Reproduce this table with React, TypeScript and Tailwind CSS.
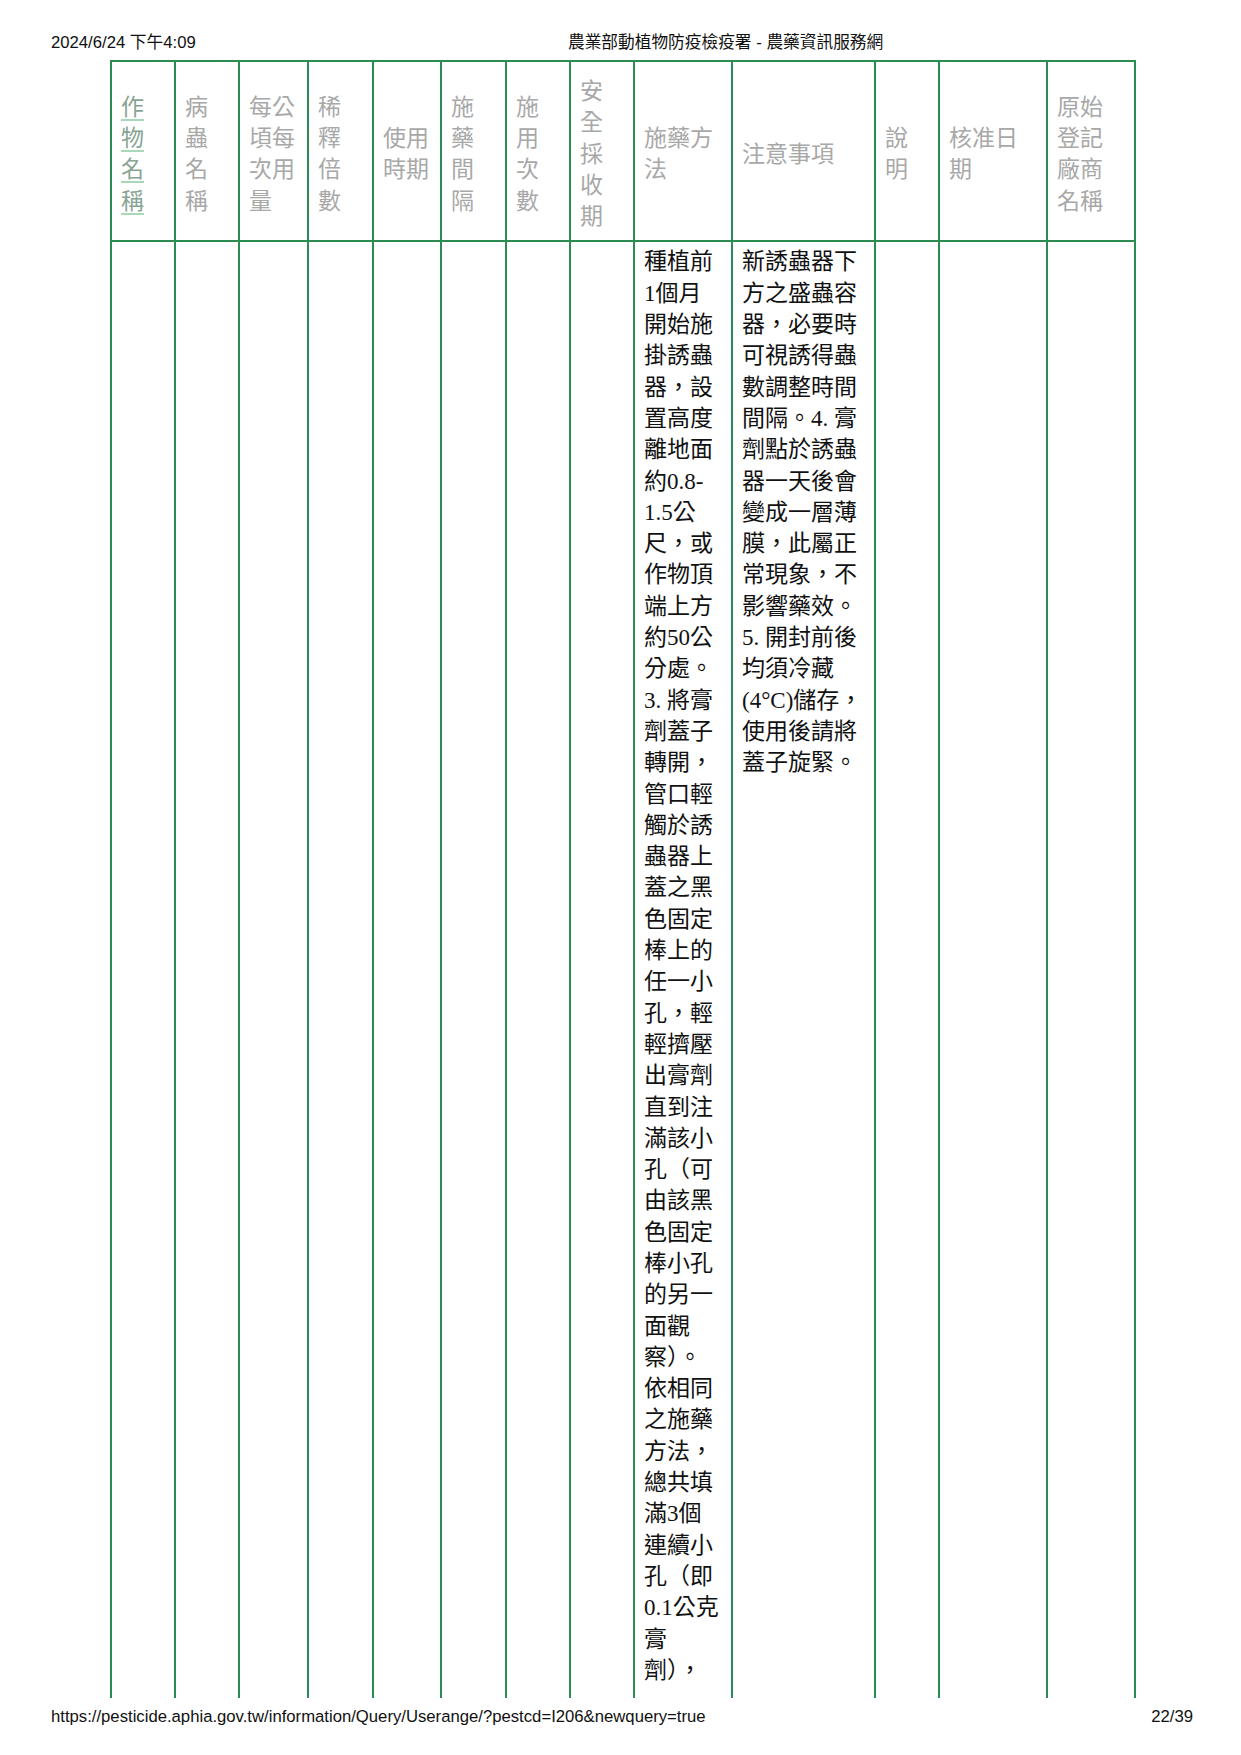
import React, { FC } from "react";

const widths = [
  "w-[64px]",
  "w-[64px]",
  "w-[69px]",
  "w-[65px]",
  "w-[68px]",
  "w-[65px]",
  "w-[64px]",
  "w-[64px]",
  "w-[98px]",
  "w-[143px]",
  "w-[64px]",
  "w-[108px]",
  "w-[88px]",
];

const headers = [
  "病蟲名稱",
  "每公頃每次用量",
  "稀釋倍數",
  "使用時期",
  "施藥間隔",
  "施用次數",
  "安全採收期",
  "施藥方法",
  "注意事項",
  "說明",
  "核准日期",
  "原始登記廠商名稱",
];

const method =
  "種植前1個月開始施掛誘蟲器，設置高度離地面約0.8-1.5公尺，或作物頂端上方約50公分處。3. 將膏劑蓋子轉開，管口輕觸於誘蟲器上蓋之黑色固定棒上的任一小孔，輕輕擠壓出膏劑直到注滿該小孔（可由該黑色固定棒小孔的另一面觀察）。依相同之施藥方法，總共填滿3個連續小孔（即0.1公克膏劑），";

const notes =
  "新誘蟲器下方之盛蟲容器，必要時可視誘得蟲數調整時間間隔。4. 膏劑點於誘蟲器一天後會變成一層薄膜，此屬正常現象，不影響藥效。5. 開封前後均須冷藏(4°C)儲存，使用後請將蓋子旋緊。";

const th =
  "border-2 border-[#2b8c52] pl-[9px] pr-[9px] pt-[12px] pb-[10px] align-middle text-left font-normal";
const td =
  "border-2 border-[#2b8c52] pl-[9px] pr-[9px] pt-[4px] align-top [font-feature-settings:'locl']";

const App: FC = () => {
  return (
    <div
      lang="zh-TW"
      className="w-[1241px] h-[1755px] bg-white overflow-hidden font-['Liberation_Sans','Noto_Sans_CJK_TC',sans-serif] text-[#111]"
    >
      <div className="flex h-[60px] pt-[34px] pl-[51px] text-[16.7px] leading-[18px]">
        <div className="w-[517px]">2024/6/24 下午4:09</div>
        <div>農業部動植物防疫檢疫署 - 農藥資訊服務網</div>
      </div>

      <div className="ml-[110px] h-[1638px] overflow-hidden">
        <table className="table-fixed border-collapse w-[1026px]">
          <colgroup>
            {widths.map((w, i) => (
              <col key={i} className={w} />
            ))}
          </colgroup>
          <thead>
            <tr className="font-['Noto_Sans_CJK_TC',sans-serif] text-[23px] leading-[31.3px] text-[#a8a8a8]">
              <th className={th}>
                <span className="text-[#88a493] underline decoration-[#a8d8b8] underline-offset-[4px]">
                  作物名稱
                </span>
              </th>
              {headers.map((h) => (
                <th key={h} className={th}>
                  {h}
                </th>
              ))}
            </tr>
          </thead>
          <tbody>
            <tr className="font-['Liberation_Serif','Noto_Sans_CJK_TC',serif] text-[23px] leading-[31.3px] text-[#111]">
              <td className={td + " h-[1600px]"}></td>
              <td className={td}></td>
              <td className={td}></td>
              <td className={td}></td>
              <td className={td}></td>
              <td className={td}></td>
              <td className={td}></td>
              <td className={td}></td>
              <td className={td}>{method}</td>
              <td className={td}>{notes}</td>
              <td className={td}></td>
              <td className={td}></td>
              <td className={td}></td>
            </tr>
          </tbody>
        </table>
      </div>

      <div className="flex justify-between pt-[10px] pl-[51px] pr-[48px] text-[16.7px] leading-[18px]">
        <div>https://pesticide.aphia.gov.tw/information/Query/Userange/?pestcd=I206&amp;newquery=true</div>
        <div>22/39</div>
      </div>
    </div>
  );
};

export default App;
